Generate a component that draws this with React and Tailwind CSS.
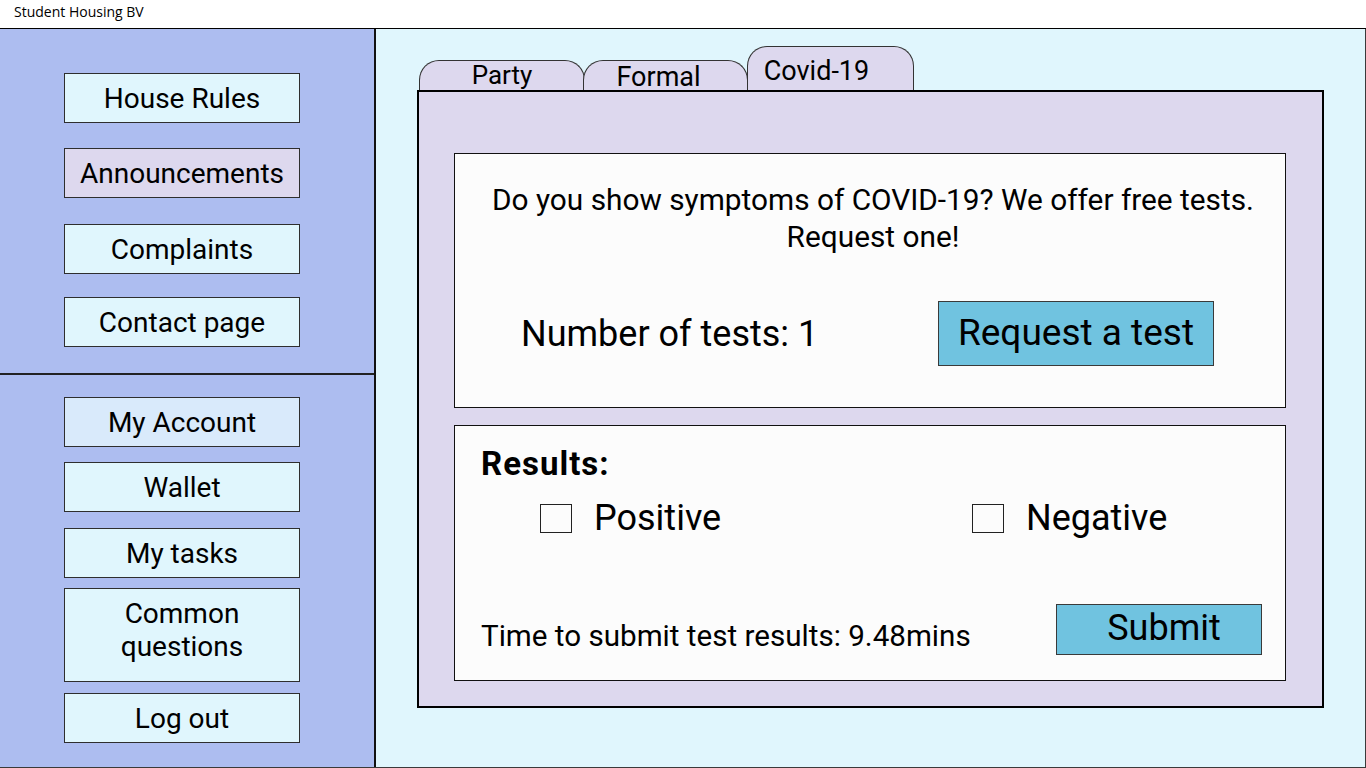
import React from 'react';

const sideTop = [
  { label: 'House Rules', mt: 'mt-[44px]', bg: 'bg-[#e0f6fd]', h: 'h-[50px]' },
  { label: 'Announcements', mt: 'mt-[25px]', bg: 'bg-[#ddd8ee]', h: 'h-[50px]' },
  { label: 'Complaints', mt: 'mt-[26px]', bg: 'bg-[#e0f6fd]', h: 'h-[50px]' },
  { label: 'Contact page', mt: 'mt-[23px]', bg: 'bg-[#e0f6fd]', h: 'h-[50px]' },
];

const sideBottom = [
  { label: 'My Account', mt: 'mt-[22px]', bg: 'bg-[#d9eafb]', h: 'h-[50px]' },
  { label: 'Wallet', mt: 'mt-[15px]', bg: 'bg-[#e0f6fd]', h: 'h-[50px]' },
  { label: 'My tasks', mt: 'mt-[16px]', bg: 'bg-[#e0f6fd]', h: 'h-[50px]' },
  { label: 'Common questions', mt: 'mt-[10px]', bg: 'bg-[#e0f6fd]', h: 'h-[94px] pb-[10px] px-6' },
  { label: 'Log out', mt: 'mt-[11px]', bg: 'bg-[#e0f6fd]', h: 'h-[50px]' },
];

function SideButton({ item }) {
  return (
    <button
      className={`${item.mt} ${item.bg} ${item.h} ml-[64px] w-[236px] border border-[#2e2e2e] text-[28px] leading-[33px] text-black`}
    >
      {item.label}
    </button>
  );
}

function Checkbox({ label }) {
  return (
    <label className="flex items-center gap-[22px]">
      <span className="w-[32px] h-[29px] border border-[#222] bg-[#fcfcfc]" />
      <span className="text-[36px] leading-none">{label}</span>
    </label>
  );
}

export default function App() {
  return (
    <div
      className="w-[1366px] h-[768px] flex flex-col overflow-hidden bg-white text-black"
      style={{ fontFamily: 'Roboto, "Liberation Sans", sans-serif' }}
    >
      <div
        className="h-[29px] shrink-0 border-b border-black pl-[14px] pt-[4px] text-[14px] leading-[16px]"
        style={{ fontFamily: '"Open Sans", "Noto Sans", sans-serif' }}
      >
        Student Housing BV
      </div>

      <div className="flex flex-1 min-h-0 border-r border-b border-[#3a3a3a]">
        {/* sidebar */}
        <aside className="w-[376px] shrink-0 bg-[#adbdf0] border-r-2 border-[#111] flex flex-col">
          <div className="h-[346px] flex flex-col items-start border-b-2 border-[#222]">
            {sideTop.map((item) => (
              <SideButton key={item.label} item={item} />
            ))}
          </div>
          <div className="flex flex-col items-start">
            {sideBottom.map((item) => (
              <SideButton key={item.label} item={item} />
            ))}
          </div>
        </aside>

        {/* content */}
        <main className="flex-1 bg-[#e0f6fd] pl-[41px] pt-[17px]">
          <div className="flex items-end ml-[2px] h-[44px]">
            <div className="w-[166px] h-[30px] rounded-t-[20px] border-[1.5px] border-b-0 border-[#333] bg-[#ddd8ee] text-center text-[26px] leading-[29px]">
              Party
            </div>
            <div className="-ml-[2px] w-[165px] h-[30px] rounded-t-[20px] border-[1.5px] border-b-0 border-[#333] bg-[#ddd8ee] text-center text-[27px] leading-[33px] pr-[14px]">
              Formal
            </div>
            <div className="-ml-[1px] w-[167px] h-[44px] rounded-t-[20px] border-[1.5px] border-b-0 border-[#333] bg-[#ddd8ee] text-center text-[27px] leading-[48px] pr-[28px]">
              Covid-19
            </div>
          </div>

          <section className="w-[907px] h-[618px] border-2 border-black bg-[#ddd8ee] pt-[61px] pl-[35px]">
            <div className="w-[832px] h-[255px] border border-[#111] bg-[#fcfcfc] flex flex-col">
              <p className="pt-[27px] text-center text-[29.8px] leading-[37px] pl-[6px]">
                Do you show symptoms of COVID-19? We offer free tests.
                <br />
                Request one!
              </p>
              <div className="flex items-center mt-[46px]">
                <span className="ml-[66px] text-[36px] leading-none">Number of tests: 1</span>
                <button className="ml-auto mr-[71px] w-[276px] h-[65px] border border-[#3a3a3a] bg-[#70c3e0] text-[37px] leading-none pb-[2px]">
                  Request a test
                </button>
              </div>
            </div>

            <div className="mt-[17px] w-[832px] h-[256px] border border-[#111] bg-[#fcfcfc] flex flex-col pl-[26px]">
              <h3 className="mt-[20px] text-[33px] leading-[36px] font-bold tracking-[1px]">Results:</h3>
              <div className="flex items-center mt-[18px] ml-[59px]">
                <div className="w-[432px]">
                  <Checkbox label="Positive" />
                </div>
                <Checkbox label="Negative" />
              </div>
              <div className="flex items-center mt-[auto] mb-[25px]">
                <span className="text-[29.6px] leading-none mt-[14px]">Time to submit test results: 9.48mins</span>
                <button className="ml-auto mr-[23px] w-[206px] h-[51px] border border-[#3a3a3a] bg-[#70c3e0] text-[36px] leading-none pl-[10px] pb-[4px] -mt-[1px]">
                  Submit
                </button>
              </div>
            </div>
          </section>
        </main>
      </div>
    </div>
  );
}
